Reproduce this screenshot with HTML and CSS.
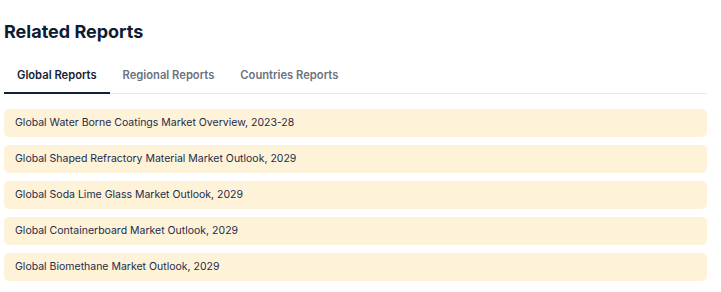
FILE: index.html
```html
<!DOCTYPE html>
<html lang="en">
<head>
<meta charset="utf-8">
<link rel="stylesheet" href="styles.css">
</head>
<body>
<section class="related">
  <h2 class="title">Related Reports</h2>
  <nav class="tabs">
    <a class="tab active">Global Reports</a>
    <a class="tab">Regional Reports</a>
    <a class="tab">Countries Reports</a>
  </nav>
  <ul class="list">
    <li class="item">Global Water Borne Coatings Market Overview, 2023-28</li>
    <li class="item">Global Shaped Refractory Material Market Outlook, 2029</li>
    <li class="item">Global Soda Lime Glass Market Outlook, 2029</li>
    <li class="item">Global Containerboard Market Outlook, 2029</li>
    <li class="item">Global Biomethane Market Outlook, 2029</li>
  </ul>
</section>
</body>
</html>
```
FILE: styles.css
```css
html, body {
  margin: 0;
  padding: 0;
  background: #ffffff;
}
body {
  font-family: Inter, "Noto Sans", sans-serif;
}
.related {
  width: 703px;
  padding: 21px 0 0 4px;
}
.title {
  margin: 0;
  font-size: 18px;
  line-height: 22px;
  font-weight: 700;
  color: #0d1b33;
}
.tabs {
  display: flex;
  margin-top: 23px;
  border-bottom: 1px solid #e5e7eb;
}
.tab {
  padding: 2px 13px 0;
  font-size: 11.2px;
  line-height: 15px;
  height: 28px;
  font-weight: 600;
  color: #6b7280;
  box-sizing: border-box;
  border-bottom: 2px solid transparent;
  margin-bottom: -1px;
}
.tab.active {
  color: #1a2233;
  border-bottom-color: #0f1f3d;
}
.list {
  list-style: none;
  margin: 15px 0 0;
  padding: 0;
  display: flex;
  flex-direction: column;
  gap: 8px;
}
.item {
  background: #fef3d8;
  border-radius: 5px;
  height: 28px;
  line-height: 27px;
  padding: 0 11px;
  font-size: 10.5px;
  color: #1d2b4a;
}
```
